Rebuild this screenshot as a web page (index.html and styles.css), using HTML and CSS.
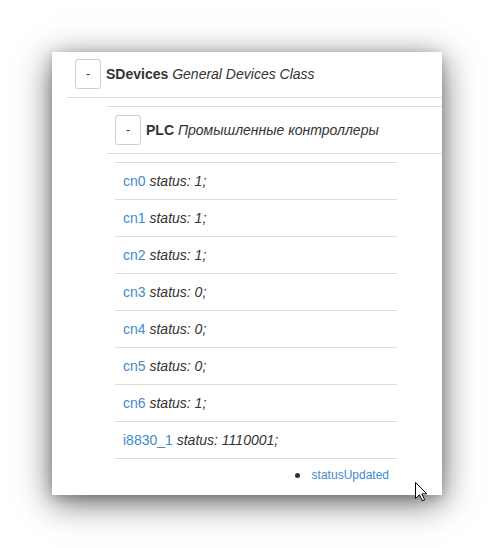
FILE: index.html
```html
<!DOCTYPE html>
<html>
<head>
<meta charset="utf-8">
<link rel="stylesheet" href="styles.css">
</head>
<body>
<div class="panel">
  <div class="group">
    <div class="head">
      <span class="toggle">-</span>
      <b>SDevices</b>&nbsp;<i>General Devices Class</i>
    </div>
  </div>
  <div class="sub">
    <div class="head">
      <span class="toggle">-</span>
      <b>PLC</b>&nbsp;<i>Промышленные контроллеры</i>
    </div>
  </div>
  <ul class="items">
    <li><a>cn0</a> <i>status: 1;</i></li>
    <li><a>cn1</a> <i>status: 1;</i></li>
    <li><a>cn2</a> <i>status: 1;</i></li>
    <li><a>cn3</a> <i>status: 0;</i></li>
    <li><a>cn4</a> <i>status: 0;</i></li>
    <li><a>cn5</a> <i>status: 0;</i></li>
    <li><a>cn6</a> <i>status: 1;</i></li>
    <li><a>i8830_1</a> <i>status: 1110001;</i></li>
  </ul>
  <div class="events">
    <span class="dot"></span><a>statusUpdated</a>
  </div>
</div>
<svg class="cursor" width="13" height="20" viewBox="0 0 13 20">
  <polygon points="0.5,0.5 0.5,16.5 4.5,12.8 7.3,18.8 9.6,17.8 6.9,11.9 11.8,11.9" fill="#fff" stroke="#000" stroke-width="1" stroke-linejoin="miter"/>
</svg>
</body>
</html>
```

FILE: styles.css
```css
html, body {
  margin: 0;
  padding: 0;
  background: #fff;
}
body {
  font-family: "Liberation Sans", Arial, sans-serif;
  font-size: 14px;
  line-height: 20px;
  color: #333;
  padding: 52px;
  height: 548px;
  box-sizing: border-box;
  position: relative;
}
.panel {
  width: 390px;
  height: 443px;
  background: #fff;
  box-shadow: 0 7px 32px rgba(0, 0, 0, 0.62), 0 3px 10px rgba(0, 0, 0, 0.18);
  overflow: hidden;
}
.group {
  margin-left: 15px;
  border-bottom: 1px solid #ddd;
}
.head {
  display: flex;
  align-items: center;
  padding: 7px 8px 8px 8px;
  height: 30px;
}
.head b {
  margin-left: 5px;
}
.toggle {
  display: inline-flex;
  align-items: center;
  justify-content: center;
  width: 24px;
  height: 28px;
  border: 1px solid #ccc;
  border-radius: 3px;
  font-size: 12px;
  color: #333;
}
.sub {
  margin: 8px 0 0 55px;
  border-top: 1px solid #ddd;
  border-bottom: 1px solid #ddd;
}
.sub .head {
  padding-top: 8px;
}
.items {
  list-style: none;
  margin: 8px 0 0 63px;
  padding: 0;
  width: 282px;
}
.items li {
  padding: 8px 8px;
  border-bottom: 1px solid #ddd;
}
.items li:first-child {
  border-top: 1px solid #ddd;
}
a {
  color: #428bca;
}
.events {
  display: flex;
  align-items: center;
  justify-content: flex-end;
  width: 328px;
  margin-left: 9px;
  padding-top: 6px;
  font-size: 12px;
}
.dot {
  width: 5px;
  height: 5px;
  border-radius: 50%;
  background: #333;
  margin-right: 12px;
}
.cursor {
  position: absolute;
  left: 415px;
  top: 482px;
}
```
